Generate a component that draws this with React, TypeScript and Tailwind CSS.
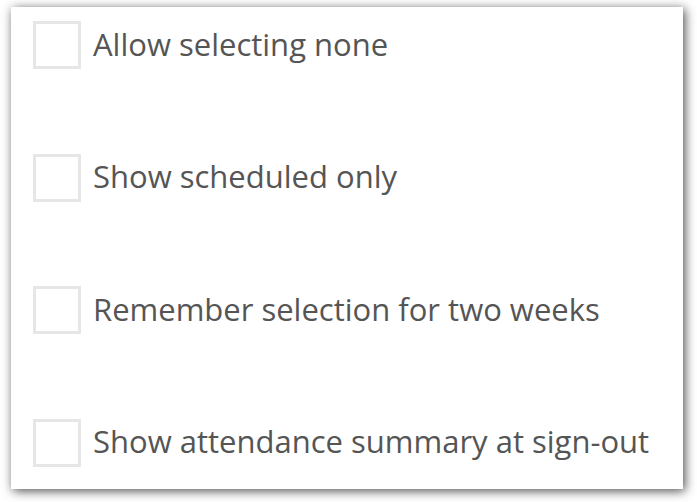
import React from 'react';

const options = [
  'Allow selecting none',
  'Show scheduled only',
  'Remember selection for two weeks',
  'Show attendance summary at sign-out',
];

export default function App() {
  return (
    <div className="w-[697px] h-[502px] bg-white pt-[7px] pl-[11px]">
      <div
        className="w-[672px] h-[482px] bg-white shadow-[2px_2px_10px_rgba(0,0,0,0.7)] pl-[22px] pt-[14px] flex flex-col gap-[84.5px]"
        style={{ fontFamily: '"Open Sans", sans-serif' }}
      >
        {options.map((label) => (
          <label key={label} className="flex items-center h-[48px] gap-[12px] text-[#555555] text-[31px]">
            <span className="w-[48px] h-[48px] border-[3px] border-[#e6e6e6] bg-white shrink-0" />
            <span className="-mt-[2px]">{label}</span>
          </label>
        ))}
      </div>
    </div>
  );
}
